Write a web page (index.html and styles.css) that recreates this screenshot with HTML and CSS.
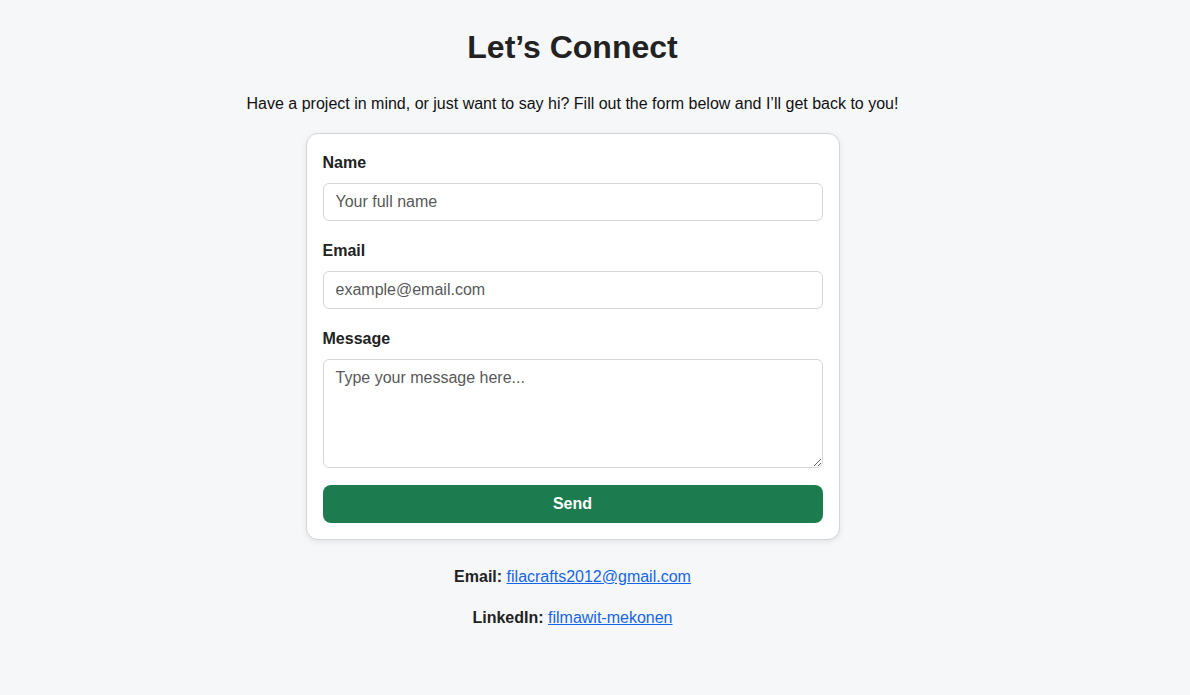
FILE: index.html
```html
<!DOCTYPE html>
<html lang="en">
<head>
<meta charset="utf-8">
<title>Let's Connect</title>
<link rel="stylesheet" href="styles.css">
</head>
<body>
<section class="contact">
  <h1 class="contact-title">Let’s Connect</h1>
  <p class="contact-intro">Have a project in mind, or just want to say hi? Fill out the form below and I’ll get back to you!</p>
  <form class="contact-card">
    <label class="field-label" for="name">Name</label>
    <input class="field-input" id="name" type="text" placeholder="Your full name">
    <label class="field-label" for="email">Email</label>
    <input class="field-input" id="email" type="email" placeholder="example@email.com">
    <label class="field-label" for="message">Message</label>
    <textarea class="field-input field-textarea" id="message" placeholder="Type your message here..."></textarea>
    <button class="send-btn" type="button">Send</button>
  </form>
  <div class="contact-info">
    <p class="contact-line"><strong>Email:</strong> <a href="#">filacrafts2012@gmail.com</a></p>
    <p class="contact-line"><strong>LinkedIn:</strong> <a href="#">filmawit-mekonen</a></p>
  </div>
</section>
</body>
</html>
```

FILE: styles.css
```css
* { box-sizing: border-box; }
html, body { margin: 0; padding: 0; }
body {
  background: #f6f7f9;
  color: #222;
  font-family: "Liberation Sans", Arial, sans-serif;
  font-size: 16px;
  width: 1190px;
  height: 695px;
  overflow: hidden;
}
.contact {
  width: 1145px;
  display: flex;
  flex-direction: column;
  align-items: center;
  text-align: center;
  padding-top: 21px;
}
.contact-title {
  font-size: 32px;
  font-weight: bold;
  margin: 0;
  line-height: 52px;
  color: #222;
}
.contact-intro {
  margin: 20px 0 19px;
  line-height: 21px;
  color: #111;
}
.contact-card {
  width: 534px;
  background: #fff;
  border: 1px solid #d4d4d6;
  border-radius: 12px;
  box-shadow: 0 2px 6px rgba(0,0,0,0.08);
  padding: 16px;
  display: flex;
  flex-direction: column;
  text-align: left;
}
.field-label {
  display: block;
  font-weight: bold;
  line-height: 24px;
  padding-top: 1px;
  margin-bottom: 8px;
  color: #222;
}
.field-input {
  display: block;
  width: 100%;
  height: 38px;
  margin: 0 0 17px;
  padding: 0 12px;
  border: 1px solid #d4d6da;
  border-radius: 6px;
  font-family: "Liberation Sans", Arial, sans-serif;
  font-size: 16px;
  color: #222;
  background: #fff;
}
.field-input::placeholder { color: #595959; }
.field-textarea {
  height: 109px;
  padding: 8px 12px;
  line-height: 20px;
  resize: vertical;
}
.send-btn {
  height: 38px;
  width: 100%;
  border: none;
  border-radius: 8px;
  background: #1c7c4f;
  color: #fff;
  font-family: "Liberation Sans", Arial, sans-serif;
  font-size: 16px;
  font-weight: bold;
  cursor: pointer;
}
.contact-info {
  display: flex;
  flex-direction: column;
  gap: 16px;
  margin-top: 24px;
}
.contact-line {
  margin: 0;
  line-height: 25px;
  color: #222;
}
.contact-line a { color: #1565e8; }
```
